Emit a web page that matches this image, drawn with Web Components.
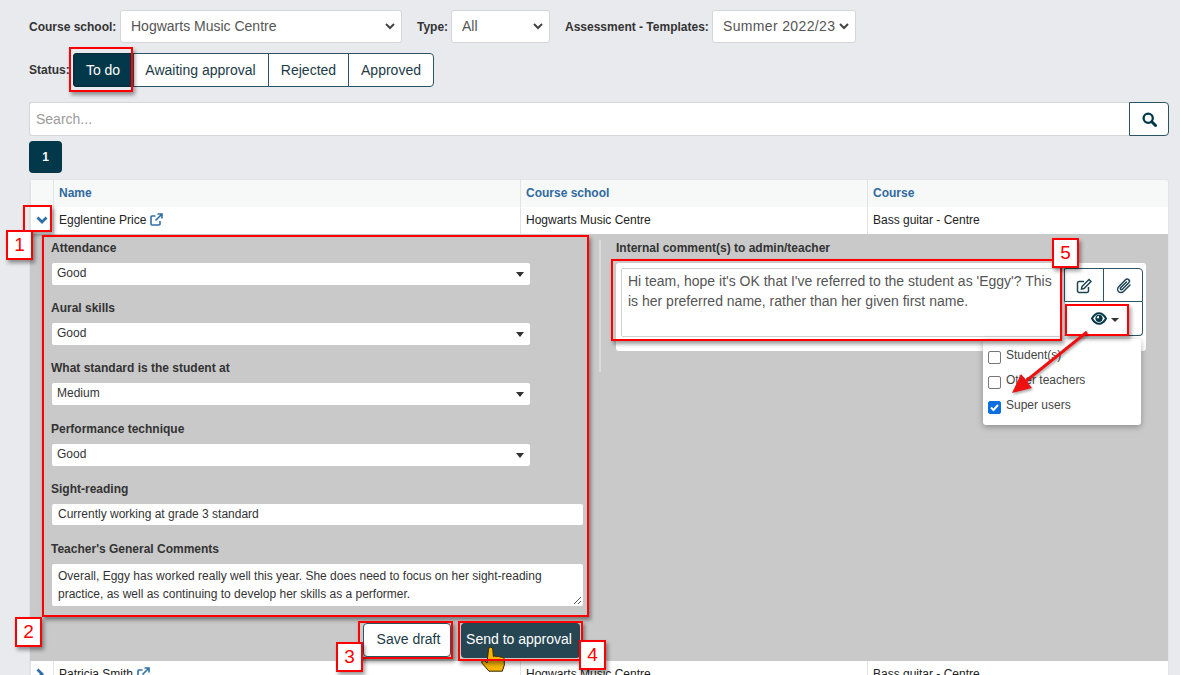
<!DOCTYPE html>
<html lang="en">
<head>
<meta charset="utf-8">
<title>Assessments</title>
<style>
  html, body { margin: 0; background: #e9eaee; }
  body { font-family: "Liberation Sans", Arial, sans-serif; color: #333; }
</style>
</head>
<body>
<review-page>
  <filter-bar></filter-bar>
  <status-tabs></status-tabs>
  <search-bar></search-bar>
  <page-number></page-number>
  <result-table></result-table>
  <hand-cursor></hand-cursor>
  <!-- annotations drawn over the screenshot -->
  <mark-box style="left:69px;top:47px;width:64px;height:45px"></mark-box>
  <mark-box style="left:23px;top:205px;width:29px;height:27px"></mark-box>
  <mark-box style="left:42px;top:235px;width:547px;height:382px"></mark-box>
  <mark-box style="left:611px;top:259px;width:451px;height:82px"></mark-box>
  <mark-box style="left:1065px;top:304px;width:64px;height:32px"></mark-box>
  <mark-box style="left:358px;top:621px;width:95px;height:38px"></mark-box>
  <mark-box style="left:458px;top:621px;width:125px;height:40px"></mark-box>
  <mark-arrow></mark-arrow>
  <mark-badge style="left:6px;top:230px">1</mark-badge>
  <mark-badge style="left:15px;top:617px">2</mark-badge>
  <mark-badge style="left:336px;top:642px">3</mark-badge>
  <mark-badge style="left:579px;top:640px">4</mark-badge>
  <mark-badge style="left:1052px;top:238px">5</mark-badge>
</review-page>

<script>
const define = (name, css, html) => {
  customElements.define(name, class extends HTMLElement {
    constructor() {
      super();
      this.attachShadow({ mode: 'open' });
      this.shadowRoot.innerHTML = `<style>${css}</style>${typeof html === 'function' ? html(this) : html}`;
    }
  });
};
const chevron = '<svg width="10" height="7" viewBox="0 0 10 7" style="margin-top:2px"><path d="M1 1l4 4 4-4" fill="none" stroke="#444" stroke-width="2"/></svg>';

define('review-page', `
  :host { display:block; position:relative; width:1180px; height:675px; overflow:hidden; box-sizing:border-box; padding:10px 11px 0 29px; }
`, '<slot></slot>');

define('top-select', `
  :host { display:flex; align-items:center; justify-content:space-between; box-sizing:border-box; height:33px; background:#fff; border:1px solid #d5d6d9; border-radius:3px; padding:0 6px 2px 10px; font-size:14px; color:#555; white-space:nowrap; }
`, `<slot></slot>${chevron}`);

define('filter-bar', `
  :host { display:flex; align-items:center; height:33px; font-size:12px; }
  b { color:#333; white-space:nowrap; }
  .a { width:91px; } .t { width:34px; margin-left:15px; } .c { width:147px; margin-left:15px; }
  .s1 { width:282px; } .s2 { width:99px; } .s3 { width:144px; letter-spacing:.35px; }
`, `<b class="a">Course school:</b><top-select class="s1">Hogwarts Music Centre</top-select>
    <b class="t">Type:</b><top-select class="s2">All</top-select>
    <b class="c">Assessment - Templates:</b><top-select class="s3">Summer 2022/23</top-select>`);

define('status-tabs', `
  :host { display:flex; align-items:center; height:34px; margin-top:10px; font-size:12px; }
  b { width:44px; white-space:nowrap; }
  .group { display:flex; height:34px; box-sizing:border-box; border:1px solid #2b5564; border-radius:4px; background:#fff; font-size:14px; color:#1c3b47; }
  span { display:flex; align-items:center; justify-content:center; border-left:1px solid #2b5564; }
  span:first-child { border:0; width:60px; margin:-1px 0 -1px -1px; background:#03384a; color:#fff; border-radius:4px; box-shadow:inset 0 0 3px #0008; }
  .w { width:133px; padding-right:1px; } .r { width:79px; } .p { width:84px; }
`, `<b>Status:</b><div class="group"><span>To do</span><span class="w">Awaiting approval</span><span class="r">Rejected</span><span class="p">Approved</span></div>`);

define('search-bar', `
  :host { display:flex; height:34px; margin-top:15px; font-size:14px; }
  .box { flex:1; box-sizing:border-box; background:#fff; border:1px solid #d5d6d9; border-right:0; border-radius:3px 0 0 3px; padding:0 6px; line-height:32px; color:#9b9b9b; }
  .btn { width:40px; box-sizing:border-box; background:#fff; border:1px solid #2b5564; border-radius:0 4px 4px 0; display:flex; align-items:center; justify-content:center; }
`, `<div class="box">Search...</div><div class="btn"><svg width="15" height="15" viewBox="0 0 15 15" fill="none" stroke="#03384a"><circle cx="6.2" cy="6.2" r="4.6" stroke-width="2.3"/><path d="M9.800 9.800l3.700 3.700" stroke-width="3" stroke-linecap="round"/></svg></div>`);

define('page-number', `
  :host { display:flex; align-items:center; justify-content:center; width:33px; height:32px; margin-top:5px; background:#03384a; color:#fff; border-radius:4px; font-size:12px; font-weight:bold; }
`, '1');

define('result-row', `
  :host { display:grid; grid-template-columns:23px 467px 347px 1fr; height:27px; font-size:12px; color:#222; }
  :host([head]) { background:#f7f8f8; color:#2f6a9e; font-weight:bold; }
  :host(:not([head])) { background:#fff; }
  div { display:flex; align-items:center; gap:4px; padding:0 0 2px 5px; box-sizing:border-box; border-left:1px solid #e2e3e5; white-space:nowrap; }
  div:first-child { border:0; padding:0; justify-content:center; }
`, el => {
  const [a, b, c] = (el.getAttribute('cells') || '').split('|');
  const ext = '<svg width="13" height="13" viewBox="0 0 13 13" fill="none" stroke="#2f6fa8" stroke-width="1.6"><path d="M10 8v3a1 1 0 0 1-1 1H2a1 1 0 0 1-1-1V4a1 1 0 0 1 1-1h3.500"/><path d="M5.500 7.500L11.500 1.500M7.500 1h4.500v4.500"/></svg>';
  let icon = '';
  if (el.hasAttribute('open')) icon = '<svg width="12" height="8" viewBox="0 0 12 8"><path d="M1.500 1.500l4.500 4.500 4.500-4.500" fill="none" stroke="#2f6fa8" stroke-width="2.800"/></svg>';
  else if (el.hasAttribute('closed')) icon = '<svg width="8" height="12" viewBox="0 0 8 12"><path d="M1.500 1.500l4.500 4.500-4.500 4.500" fill="none" stroke="#2f6fa8" stroke-width="2.800"/></svg>';
  return `<div>${icon}</div><div>${a}${el.hasAttribute('head') ? '' : ext}</div><div>${b}</div><div>${c}</div>`;
});

define('form-field', `
  :host { display:block; margin-bottom:14px; font-size:12px; color:#333; }
  :host([fourth]) { padding-top:1px; }
  :host([kind="input"]) { margin-bottom:15px; }
  :host([kind="area"]) { margin-bottom:0; }
  label { display:block; height:16px; line-height:18px; margin-bottom:8px; font-weight:bold; }
  .sel, .inp, .area { margin-left:1px; background:#fff; box-sizing:border-box; border-radius:2px; }
  .sel { width:478px; height:22px; padding:0 6px 2px 5px; display:flex; align-items:center; justify-content:space-between; }
  .sel i { border:4px solid transparent; border-top:5px solid #333; border-bottom:0; margin-top:3px; }
  .inp { width:531px; height:21px; line-height:20px; padding-left:6px; }
  .area { width:531px; height:42px; padding:3px 6px; line-height:18px; position:relative; }
  svg { position:absolute; right:1px; bottom:1px; }
`, el => {
  const kind = el.getAttribute('kind') || 'select';
  const label = `<label>${el.getAttribute('label')}</label>`;
  if (kind === 'input') return `${label}<div class="inp"><slot></slot></div>`;
  if (kind === 'area') return `${label}<div class="area"><slot></slot><svg width="9" height="9" viewBox="0 0 9 9" stroke="#555"><path d="M1 8l7-7M5 8l3-3"/></svg></div>`;
  return `${label}<div class="sel"><slot></slot><i></i></div>`;
});

define('comment-box', `
  :host { display:block; margin:0; font-size:12px; color:#333; }
  label { display:block; height:16px; line-height:18px; margin-bottom:8px; font-weight:bold; }
  .card { display:flex; gap:3px; box-sizing:border-box; width:530px; height:88px; padding:5px; background:#fff; border-radius:3px; position:relative; }
  .text { flex:none; width:440px; height:69px; box-sizing:border-box; border:1px solid #cfd0d3; border-radius:2px; padding:2px 0 0 6px; font-size:14px; line-height:20px; color:#555; }
  .tools { flex:none; width:79px; }
  .row { display:flex; height:34px; box-sizing:border-box; border:1px solid #2b5564; color:#03384a; }
  .row span { flex:1; display:flex; align-items:center; justify-content:center; }
  .row span + span { border-left:1px solid #2b5564; }
  .row.top { border-radius:0 4px 0 0; }
  .row.bottom { border-top:0; border-radius:0 0 4px 0; border-left-color:#d5d6d9; }
  .row.bottom span { flex:none; width:77px; box-sizing:border-box; padding-left:2px; gap:4px; }
  .caret { border:4.500px solid transparent; border-top:4px solid #333; border-bottom:0; margin-top:3px; }
  .menu { position:absolute; left:367px; top:76px; width:158px; height:86px; box-sizing:border-box; background:#fff; border-radius:3px; box-shadow:0 2px 6px rgba(0,0,0,.3); padding-top:5px; }
  .opt { display:flex; gap:5px; height:25px; padding-left:5px; line-height:22px; color:#444; }
  .opt i { width:13px; height:13px; margin-top:7px; box-sizing:border-box; border:1px solid #767676; border-radius:2px; background:#fff; display:flex; }
  .opt i.on { background:#0b6fdf; border-color:#0b6fdf; }
`, `<label>Internal comment(s) to admin/teacher</label>
  <div class="card">
    <div class="text">Hi team, hope it's OK that I've referred to the student as 'Eggy'? This is her preferred name, rather than her given first name.</div>
    <div class="tools">
      <div class="row top">
        <span><svg width="17" height="17" viewBox="0 0 17 17" fill="none" stroke="#1f4552" stroke-width="1.500"><path d="M12.500 10v4a1.500 1.500 0 0 1-1.500 1.500H3A1.500 1.500 0 0 1 1.500 14V6A1.500 1.500 0 0 1 3 4.500h5"/><path d="M6 9.500L13 2.500l2 2-7 7-2.500.5z"/></svg></span>
        <span><svg width="17" height="17" viewBox="0 0 17 17" fill="none" stroke="#1f4552" stroke-width="1.500" stroke-linecap="round"><path d="M15 8l-6.500 6.500a3.300 3.300 0 0 1-5-4.600L10.500 2.800a2.200 2.200 0 0 1 3.300 3L7.300 12.300a1.100 1.100 0 0 1-1.700-1.500L11.500 5"/></svg></span>
      </div>
      <div class="row bottom"><span><svg width="16" height="13" viewBox="0 0 16 13"><path d="M1 6.500C3 2.800 5.200 1.200 8 1.200S13 2.800 15 6.500C13 10.200 10.800 11.800 8 11.800S3 10.200 1 6.500z" fill="none" stroke="#03384a" stroke-width="2"/><circle cx="8" cy="6.300" r="3.600" fill="#03384a"/><path d="M8 3.800a2.500 2.500 0 0 0-2.400 2.500H8z" fill="#fff"/></svg><i class="caret"></i></span></div>
    </div>
    <div class="menu">
      <div class="opt"><i></i>Student(s)</div>
      <div class="opt"><i></i>Other teachers</div>
      <div class="opt"><i class="on"><svg width="11" height="11" viewBox="0 0 11 11"><path d="M2 5.500l2.500 2.500 4.500-5" fill="none" stroke="#fff" stroke-width="2"/></svg></i>Super users</div>
    </div>
  </div>`);

define('action-buttons', `
  :host { display:flex; gap:10px; height:34px; margin:17px 0 0 333px; padding-bottom:4px; font-size:14px; }
  span { display:flex; align-items:center; justify-content:center; box-sizing:border-box; border-radius:4px; }
  .save { width:88px; padding:0 0 2px 3px; background:#fff; border:1px solid #2b5564; color:#1c3b47; }
  .send { width:119px; padding:0 3px 3px 0; height:35px; background:#264653; color:#fff; }
`, '<span class="save">Save draft</span><span class="send">Send to approval</span>');

define('detail-panel', `
  :host { display:block; background:#c9c9c9; }
  .cols { display:flex; }
  .left { width:570px; box-sizing:border-box; padding:5px 0 0 21px; }
  .right { padding-top:5px; margin-left:16px; position:relative; }
  .rule { position:absolute; left:-17px; top:6px; width:2px; height:132px; background:#dcdcdc; }
`, `<div class="cols"><div class="left"><slot name="left"></slot></div>
    <div class="right"><div class="rule"></div><slot name="right"></slot></div></div>
    <slot name="actions"></slot>`);

define('result-table', `
  :host { display:block; margin-top:6px; border:1px solid #e2e3e5; border-bottom:0; border-radius:3px 3px 0 0; width:1138px; overflow:hidden; }
`, `<result-row head cells="Name|Course school|Course"></result-row>
  <result-row open cells="Egglentine Price|Hogwarts Music Centre|Bass guitar - Centre"></result-row>
  <detail-panel>
    <form-field slot="left" label="Attendance">Good</form-field>
    <form-field slot="left" label="Aural skills">Good</form-field>
    <form-field slot="left" label="What standard is the student at">Medium</form-field>
    <form-field slot="left" fourth label="Performance technique">Good</form-field>
    <form-field slot="left" kind="input" label="Sight-reading">Currently working at grade 3 standard</form-field>
    <form-field slot="left" kind="area" label="Teacher's General Comments">Overall, Eggy has worked really well this year. She does need to focus on her sight-reading practice, as well as continuing to develop her skills as a performer.</form-field>
    <comment-box slot="right"></comment-box>
    <action-buttons slot="actions"></action-buttons>
  </detail-panel>
  <result-row closed cells="Patricia Smith|Hogwarts Music Centre|Bass guitar - Centre"></result-row>`);

define('mark-box', `
  :host { position:absolute; box-sizing:border-box; border:2px solid #f00; box-shadow:2px 3px 4px rgba(0,0,0,.4); pointer-events:none; }
`, '');

define('mark-badge', `
  :host { position:absolute; display:flex; align-items:center; justify-content:center; box-sizing:border-box; width:27px; height:30px; border:2px solid #f00; background:#fff; color:#f00; font-size:19px; box-shadow:2px 3px 4px rgba(0,0,0,.4); }
`, '<slot></slot>');

define('mark-arrow', `
  :host { position:absolute; left:0; top:0; width:1180px; height:675px; pointer-events:none; }
  svg { position:absolute; left:0; top:0; filter:drop-shadow(1px 2px 1px rgba(0,0,0,.3)); }
`, `<svg width="1180" height="675" viewBox="0 0 1180 675"><path d="M1087 332L1026 381" stroke="#ee1111" stroke-width="3"/><path d="M1012 393l9-19 11 14z" fill="#ee1111"/></svg>`);

define('hand-cursor', `
  :host { position:absolute; left:480px; top:646px; width:28px; height:30px; }
  svg { display:block; }
`, `<svg width="28" height="30" viewBox="0 0 28 30"><path d="M8.500 3a2.200 2.200 0 0 1 4.300 0l.5 7.500 1.500-.5 1.500.5 2-.2 2 .7 2 .2c1.500.5 2 1.500 2 3v5l-2 6H9l-7-8c-1-1.500.5-3.500 2.500-2.500L7 17z" fill="#f7b500" stroke="#33260a" stroke-width="1"/></svg>`);
</script>
</body>
</html>
